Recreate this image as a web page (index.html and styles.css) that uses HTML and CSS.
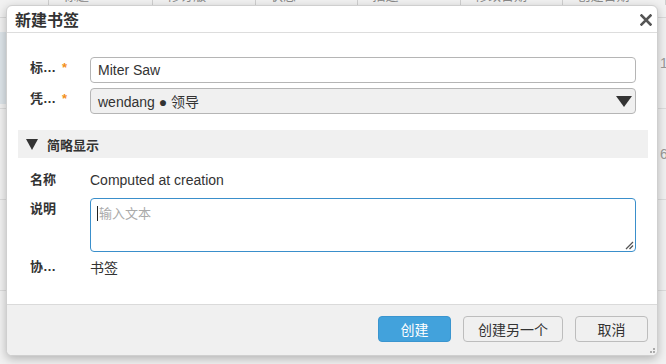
FILE: index.html
```html
<!DOCTYPE html>
<html lang="zh">
  <head>
    <meta charset="UTF-8" />
    <title>新建书签</title>
    <link rel="stylesheet" href="styles.css">
  </head>
  <body>
    <div class="page">
      <div class="thead">
        <span class="th th-check"></span>
        <span class="th">标题</span>
        <span class="th">修订版</span>
        <span class="th">状态</span>
        <span class="th">描述</span>
        <span class="th">修改日期</span>
        <span class="th">创建日期</span>
      </div>
      <div class="trow selected"><span class="num">1</span></div>
      <div class="trow"><span class="num">6</span></div>
      <div class="trow"><span class="num"></span></div>
      <div class="trow"><span class="num"></span></div>
    </div>

    <div class="dialog">
      <div class="dialog-head">
        <h2>新建书签</h2>
        <svg class="close" width="12" height="12" viewBox="0 0 12 12">
          <path d="M1.5 1.5 L10.5 10.5 M10.5 1.5 L1.5 10.5" stroke="#555" stroke-width="2.6" stroke-linecap="square" />
        </svg>
      </div>

      <div class="dialog-body">
        <div class="field">
          <label>标…<em>*</em></label>
          <input class="input" type="text" value="Miter Saw" />
        </div>
        <div class="field">
          <label>凭…<em>*</em></label>
          <div class="select">
            <span>wendang ● 领导</span>
            <svg width="16" height="11" viewBox="0 0 16 11"><path d="M0 0 H16 L8 11 Z" fill="#333" /></svg>
          </div>
        </div>

        <div class="section">
          <svg width="12" height="11" viewBox="0 0 12 11"><path d="M0 0 H12 L6 11 Z" fill="#333" /></svg>
          <span>简略显示</span>
        </div>

        <div class="field static">
          <label>名称</label>
          <span class="value">Computed at creation</span>
        </div>
        <div class="field">
          <label>说明</label>
          <div class="textarea">
            <span class="caret"></span><span class="placeholder">输入文本</span>
            <svg class="grip" width="10" height="10" viewBox="0 0 10 10">
              <path d="M9 2 L2 9 M9 5.5 L5.5 9" stroke="#555" stroke-width="1.3" />
            </svg>
          </div>
        </div>
        <div class="field static last">
          <label>协…</label>
          <span class="value">书签</span>
        </div>
      </div>

      <div class="dialog-foot">
        <button class="btn primary">创建</button>
        <button class="btn wide">创建另一个</button>
        <button class="btn">取消</button>
        <span class="resize"></span>
      </div>
    </div>
  </body>
</html>
```

FILE: styles.css
```css
* {
  margin: 0;
  padding: 0;
  box-sizing: border-box;
}

body {
  font-family: "Liberation Sans", "Noto Sans CJK SC", sans-serif;
  font-size: 14px;
  color: #333;
  background: #f1f1f1;
  width: 666px;
  height: 364px;
  overflow: hidden;
  position: relative;
}

/* table behind the dialog */
.page {
  margin-top: -10px;
}

.thead {
  display: flex;
  height: 28px;
  align-items: flex-start;
  border-bottom: 1px solid #d9d9d9;
  font-size: 13px;
  color: #888;
}

.th {
  width: 112px;
  height: 15px;
  padding-left: 14px;
  border-right: 1px solid #cfcfcf;
  line-height: 12px;
}

.th-check {
  width: 49px;
  flex: none;
}

.th:nth-child(2) {
  width: 114px;
}

.trow {
  height: 91px;
  border-bottom: 1px solid #dcdcdc;
  display: flex;
  justify-content: flex-end;
  align-items: center;
  color: #999;
  font-size: 14px;
}

.trow.selected {
  background: linear-gradient(to right, #dde4e9 6px, transparent 6px);
  background-size: 100% 72px;
  background-position: 0 14px;
  background-repeat: no-repeat;
}

.num {
  width: 6px;
  overflow: hidden;
}

/* dialog */
.dialog {
  position: absolute;
  left: 6px;
  top: 5px;
  width: 652px;
  height: 351px;
  background: #fff;
  border: 1px solid #cfcfcf;
  border-radius: 6px;
  box-shadow: 0 3px 10px rgba(0, 0, 0, 0.25);
  display: flex;
  flex-direction: column;
  overflow: hidden;
}

.dialog-head {
  height: 27px;
  flex: none;
  display: flex;
  align-items: center;
  justify-content: space-between;
  padding: 0 5px 0 8px;
  border-bottom: 1px solid #ddd;
}

.dialog-head h2 {
  font-size: 16px;
  font-weight: 600;
  color: #333;
  font-family: "Noto Sans CJK SC", sans-serif;
}

.close {
  margin-top: 1px;
}

.dialog-body {
  flex: 1;
  padding: 24px 9px 0 11px;
  display: flex;
  flex-direction: column;
}

.field {
  display: flex;
  align-items: flex-start;
  padding: 0 12px;
  margin-bottom: 5px;
}

.field label {
  width: 60px;
  flex: none;
  font-size: 13px;
  font-weight: bold;
  line-height: 20px;
  padding-top: 1px;
  color: #333;
}

.field label em {
  font-style: normal;
  color: #f39019;
  margin-left: 6px;
}

.input,
.select {
  flex: 1;
  height: 26px;
  border: 1px solid #b5b5b5;
  border-radius: 4px;
  padding: 0 7px;
  font-family: inherit;
  font-size: 14px;
  color: #333;
  background: #fff;
  outline: none;
}

.select {
  background: #f0f0f0;
  display: flex;
  align-items: center;
  justify-content: space-between;
  padding-right: 3px;
}

.section {
  margin: 11px 0 10px;
  height: 28px;
  background: #f0f0f0;
  display: flex;
  align-items: center;
  gap: 9px;
  padding-left: 8px;
  font-size: 13px;
  font-weight: bold;
  font-family: "Noto Sans CJK SC", sans-serif;
}

.field.static {
  height: 24px;
  align-items: center;
  margin-bottom: 6px;
}

.field.static.last {
  margin-top: -2px;
}

.field.static label {
  padding-top: 0;
}

.value {
  font-size: 14px;
  color: #333;
}

.textarea {
  flex: 1;
  height: 54px;
  border: 1px solid #3a8fcb;
  border-radius: 4px;
  padding: 5px 6px;
  position: relative;
  display: flex;
  align-items: flex-start;
  font-size: 13px;
}

.caret {
  width: 1px;
  height: 15px;
  background: #222;
  margin-top: 2px;
  margin-right: 1px;
}

.placeholder {
  color: #aaa;
  line-height: 19px;
}

.grip {
  position: absolute;
  right: 1px;
  bottom: 1px;
}

.dialog-foot {
  height: 51px;
  flex: none;
  background: #f0f0f0;
  border-top: 1px solid #dadada;
  display: flex;
  align-items: flex-start;
  justify-content: flex-end;
  padding: 11px 9px 0 0;
  gap: 12px;
  position: relative;
}

.btn {
  width: 73px;
  height: 26px;
  border: 1px solid #bdbdbd;
  border-radius: 4px;
  background: #f0f0f0;
  font-family: "Noto Sans CJK SC", sans-serif;
  font-size: 14px;
  color: #333;
}

.btn.primary {
  background: #42a2dc;
  border-color: #3a95cf;
  color: #fff;
}

.btn.wide {
  width: 100px;
}

.resize {
  position: absolute;
  right: 2px;
  bottom: 2px;
  width: 5px;
  height: 5px;
  border-right: 2px dotted #aaa;
  border-bottom: 2px dotted #aaa;
}
```
